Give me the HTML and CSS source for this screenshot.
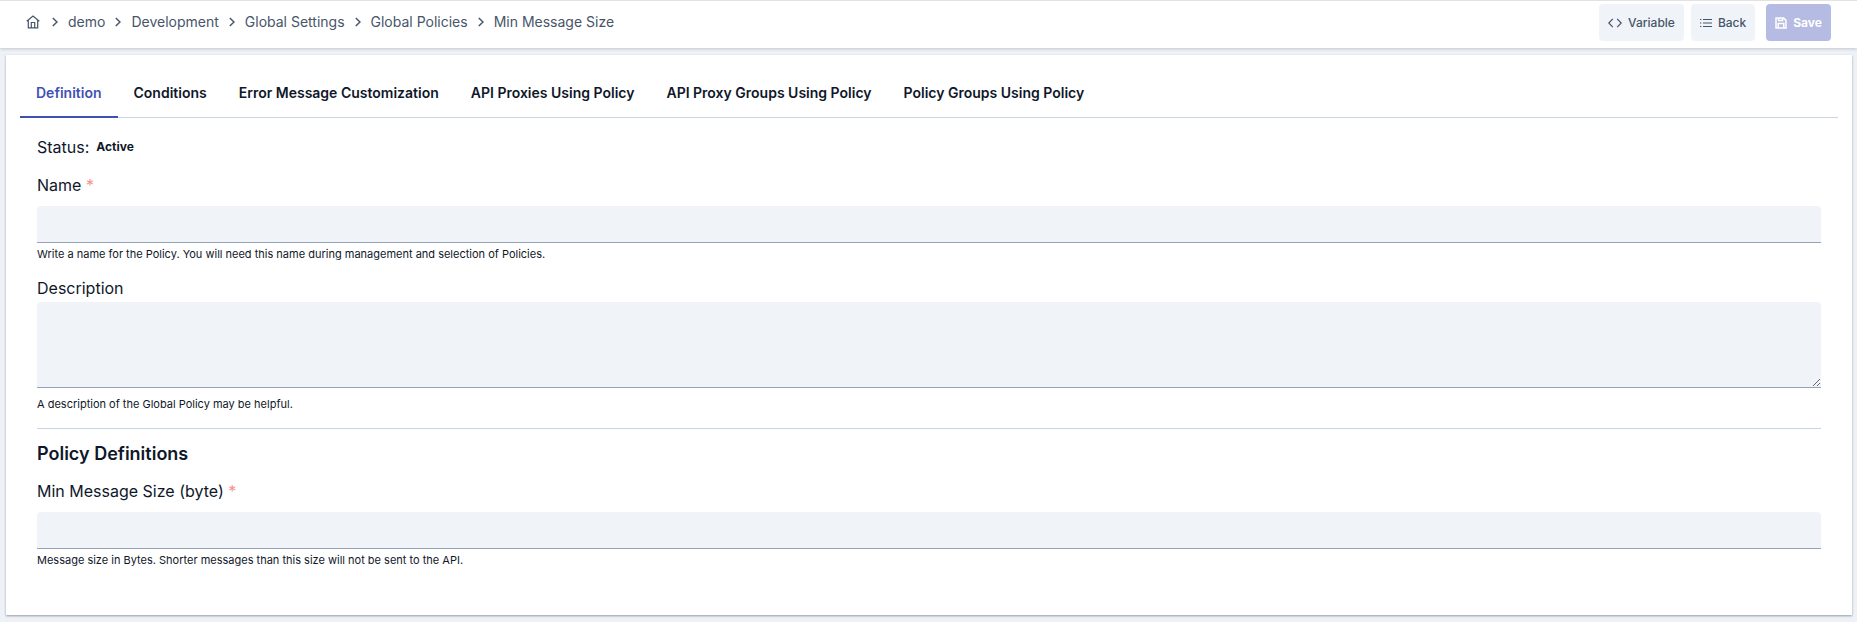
FILE: index.html
```html
<!DOCTYPE html>
<html lang="en">
<head>
<meta charset="UTF-8" />
<meta name="viewport" content="width=device-width, initial-scale=1" />
<title>Min Message Size</title>
<link rel="stylesheet" href="styles.css">
</head>
<body>

<header class="topbar">
  <nav class="breadcrumb" aria-label="Breadcrumb">
    <a href="#" class="home" aria-label="Home">
      <svg width="14" height="14" viewBox="0 0 14 14"><path d="M.7 6.3 7 1l6.3 5.3M2.3 5.2v7.6h9.4V5.2M5.3 12.8V7.5h3.4v5.3"/></svg>
    </a>
    <svg class="chevron" width="6" height="10" viewBox="0 0 6 10"><path d="M.8 1 5 5 .8 9"/></svg>
    <a href="#">demo</a>
    <svg class="chevron" width="6" height="10" viewBox="0 0 6 10"><path d="M.8 1 5 5 .8 9"/></svg>
    <a href="#">Development</a>
    <svg class="chevron" width="6" height="10" viewBox="0 0 6 10"><path d="M.8 1 5 5 .8 9"/></svg>
    <a href="#">Global Settings</a>
    <svg class="chevron" width="6" height="10" viewBox="0 0 6 10"><path d="M.8 1 5 5 .8 9"/></svg>
    <a href="#">Global Policies</a>
    <svg class="chevron" width="6" height="10" viewBox="0 0 6 10"><path d="M.8 1 5 5 .8 9"/></svg>
    <a href="#">Min Message Size</a>
  </nav>
  <div class="actions">
    <button type="button" class="btn">
      <svg width="14" height="12" viewBox="0 0 14 12"><path d="M4.8 1.8.8 6l4 4.2M9.2 1.8l4 4.2-4 4.2"/></svg>
      Variable
    </button>
    <button type="button" class="btn">
      <svg width="12" height="12" viewBox="0 0 12 12"><path d="M0 2.5h1.4M0 6h1.4M0 9.5h1.4M3 2.5h9M3 6h9M3 9.5h9"/></svg>
      Back
    </button>
    <button type="submit" form="policy-form" class="btn btn-save" disabled>
      <svg width="12" height="12" viewBox="0 0 12 12"><path d="M1 1h7.6L11 3.4V11H1zM3.2 11V6.4h5.6V11M3.6 1v2.6h4V1"/></svg>
      Save
    </button>
  </div>
</header>

<main class="card">
  <div class="tabs" role="tablist">
    <button type="button" role="tab" class="tab active" aria-selected="true">Definition</button>
    <button type="button" role="tab" class="tab">Conditions</button>
    <button type="button" role="tab" class="tab">Error Message Customization</button>
    <button type="button" role="tab" class="tab">API Proxies Using Policy</button>
    <button type="button" role="tab" class="tab">API Proxy Groups Using Policy</button>
    <button type="button" role="tab" class="tab">Policy Groups Using Policy</button>
  </div>

  <form class="policy-form" id="policy-form">
    <div class="status">Status: <strong>Active</strong></div>

    <div class="field">
      <label for="name">Name <span class="required">*</span></label>
      <input type="text" id="name" required />
      <p class="hint">Write a name for the Policy. You will need this name during management and selection of Policies.</p>
    </div>

    <div class="field field-area">
      <label for="description">Description</label>
      <textarea id="description"></textarea>
      <p class="hint">A description of the Global Policy may be helpful.</p>
    </div>

    <hr />

    <h2>Policy Definitions</h2>
    <div class="field">
      <label for="min-size">Min Message Size (byte) <span class="required">*</span></label>
      <input type="text" id="min-size" inputmode="numeric" required />
      <p class="hint">Message size in Bytes. Shorter messages than this size will not be sent to the API.</p>
    </div>
  </form>
</main>

</body>
</html>
```
FILE: styles.css
```css
* {
  box-sizing: border-box;
}
body {
  margin: 0;
  font-family: Inter, "Liberation Sans", sans-serif;
  font-size: 16px;
  line-height: 24px;
  color: #0f172a;
  background: #eef2f7;
}
svg {
  display: block;
  fill: none;
  stroke: currentColor;
  stroke-width: 1.2;
}
button, input, textarea {
  font-family: inherit;
}

/* top bar */
.topbar {
  display: flex;
  justify-content: space-between;
  align-items: center;
  height: 48px;
  padding: 0 26px 4px;
  background: white;
  border-top: 1px solid #e2e2e3;
  box-shadow: 0 1px 3px rgba(15, 23, 42, 0.2);
}
.breadcrumb {
  display: flex;
  align-items: center;
  gap: 10px;
  padding-bottom: 1px;
  font-size: 14px;
  line-height: 20px;
  color: #475569;
}
.breadcrumb a {
  color: inherit;
  text-decoration: none;
}
.chevron {
  stroke-width: 1.5;
}
.home {
  margin-right: 2px;
}
.actions {
  display: flex;
  gap: 7px;
}
.btn {
  display: flex;
  align-items: center;
  gap: 6px;
  height: 37px;
  padding: 0 9px;
  border: none;
  border-radius: 4px;
  background: #f0f4f9;
  color: #475569;
  font-size: 12px;
  font-weight: 500;
  cursor: pointer;
}
.btn-save {
  margin-left: 4px;
  background: #b5bbe2;
  color: white;
  font-weight: 700;
}
.btn-save svg {
  stroke-width: 1.5;
}

/* card */
.card {
  margin: 7px 5px 7px 6px;
  padding: 14px 14px 47px;
  background: white;
  box-shadow: 0 1px 2px rgba(15, 23, 42, 0.4);
}
.tabs {
  display: flex;
  border-bottom: 1px solid #cbd5e1;
}
.tab {
  height: 49px;
  margin-bottom: -1px;
  padding: 0 16px;
  border: none;
  border-bottom: 2px solid transparent;
  background: none;
  color: #0f172a;
  font-size: 14px;
  font-weight: 600;
  cursor: pointer;
}
.tab.active {
  border-color: #3f51b5;
  color: #3f51b5;
}

/* form */
.policy-form {
  padding: 17px 17px 0;
}
.status {
  display: flex;
  align-items: center;
  gap: 7px;
}
.status strong {
  font-size: 12px;
  font-weight: 700;
}
.field {
  margin-top: 14px;
}
.field label {
  display: block;
  margin-bottom: 9px;
}
.required {
  color: #f8908e;
}
.field input, .field textarea {
  display: block;
  width: 100%;
  height: 37px;
  padding: 8px;
  border: none;
  border-bottom: 1px solid #94a3b8;
  border-radius: 4px 4px 0 0;
  background: #f0f4f9;
  font-size: 14px;
}
.field textarea {
  height: 86px;
  resize: vertical;
}
.field-area label {
  margin-bottom: 2px;
}
.hint {
  margin: 3px 0 0;
  font-size: 11px;
  line-height: 16px;
}
.field-area .hint {
  margin-top: 8px;
}
hr {
  margin: 16px 0 0;
  border: none;
  border-top: 1px solid #cbd5e1;
}
h2 {
  margin: 14px 0 0;
  font-size: 18px;
  font-weight: 600;
  line-height: 22px;
}
```
